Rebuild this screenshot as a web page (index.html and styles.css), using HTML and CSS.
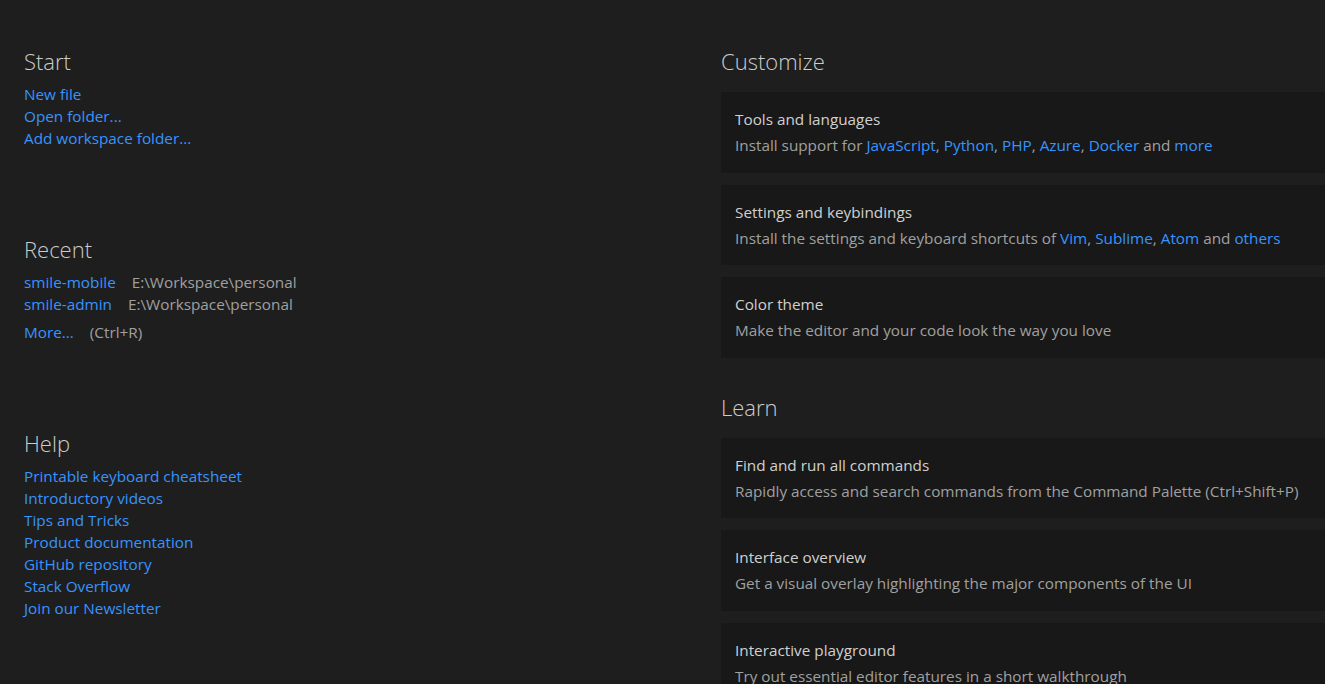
FILE: index.html
```html
<!DOCTYPE html>
<html>
<head>
<meta charset="utf-8">
<link rel="stylesheet" href="styles.css">
</head>
<body>
<div class="page">
  <div class="col left">
    <section class="sec start">
      <h2 class="title">Start</h2>
      <ul class="links">
        <li><a class="link">New file</a></li>
        <li><a class="link">Open folder...</a></li>
        <li><a class="link">Add workspace folder...</a></li>
      </ul>
    </section>
    <section class="sec recent">
      <h2 class="title">Recent</h2>
      <ul class="links">
        <li><a class="link">smile-mobile</a><span class="path">E:\Workspace\personal</span></li>
        <li><a class="link">smile-admin</a><span class="path">E:\Workspace\personal</span></li>
        <li class="more"><a class="link">More...</a><span class="path">(Ctrl+R)</span></li>
      </ul>
    </section>
    <section class="sec help">
      <h2 class="title">Help</h2>
      <ul class="links">
        <li><a class="link">Printable keyboard cheatsheet</a></li>
        <li><a class="link">Introductory videos</a></li>
        <li><a class="link">Tips and Tricks</a></li>
        <li><a class="link">Product documentation</a></li>
        <li><a class="link">GitHub repository</a></li>
        <li><a class="link">Stack Overflow</a></li>
        <li><a class="link">Join our Newsletter</a></li>
      </ul>
    </section>
  </div>
  <div class="col right">
    <section class="sec customize">
      <h2 class="title">Customize</h2>
      <div class="cards">
        <div class="card">
          <div class="card-title">Tools and languages</div>
          <div class="card-desc">Install support for <a class="link">JavaScript</a>, <a class="link">Python</a>, <a class="link">PHP</a>, <a class="link">Azure</a>, <a class="link">Docker</a> and <a class="link">more</a></div>
        </div>
        <div class="card">
          <div class="card-title">Settings and keybindings</div>
          <div class="card-desc">Install the settings and keyboard shortcuts of <a class="link">Vim</a>, <a class="link">Sublime</a>, <a class="link">Atom</a> and <a class="link">others</a></div>
        </div>
        <div class="card">
          <div class="card-title">Color theme</div>
          <div class="card-desc">Make the editor and your code look the way you love</div>
        </div>
      </div>
    </section>
    <section class="sec learn">
      <h2 class="title">Learn</h2>
      <div class="cards">
        <div class="card">
          <div class="card-title">Find and run all commands</div>
          <div class="card-desc">Rapidly access and search commands from the Command Palette (Ctrl+Shift+P)</div>
        </div>
        <div class="card">
          <div class="card-title">Interface overview</div>
          <div class="card-desc">Get a visual overlay highlighting the major components of the UI</div>
        </div>
        <div class="card">
          <div class="card-title">Interactive playground</div>
          <div class="card-desc">Try out essential editor features in a short walkthrough</div>
        </div>
      </div>
    </section>
  </div>
</div>
</body>
</html>
```

FILE: styles.css
```css
html, body {
  margin: 0;
  padding: 0;
  background: #1e1e1e;
  height: 100%;
  overflow: hidden;
}
body {
  font-family: "Open Sans", "Noto Sans", sans-serif;
  font-size: 15.3px;
  color: #cccccc;
}
.page {
  display: flex;
  padding-top: 45px;
}
.col.left {
  width: 721px;
  padding-left: 24px;
  box-sizing: border-box;
  flex: none;
}
.col.right {
  flex: 1;
  min-width: 0;
}
.title {
  margin: 0;
  font-size: 22px;
  font-weight: 300;
  line-height: 32px;
  height: 32px;
  color: #cccccc;
}
.links {
  list-style: none;
  margin: 6px 0 0;
  padding: 0;
}
.links li {
  line-height: 22px;
  height: 22px;
  white-space: nowrap;
}
.links li.more {
  margin-top: 6px;
}
.link {
  color: #3794ff;
  text-decoration: none;
  cursor: pointer;
}
.path {
  color: #a0a0a0;
  margin-left: 16px;
}
.left .sec + .sec {
  margin-top: 84px;
}
.cards {
  margin-top: 15px;
  display: flex;
  flex-direction: column;
  gap: 12px;
}
.card {
  background: #181818;
  height: 80.5px;
  box-sizing: border-box;
  padding: 16px 14px 0;
  white-space: nowrap;
}
.card-title {
  line-height: 22px;
  color: #d0d0d0;
}
.card-desc {
  margin-top: 4px;
  line-height: 22px;
  color: #a0a0a0;
}
.right .learn {
  margin-top: 33px;
}
```
